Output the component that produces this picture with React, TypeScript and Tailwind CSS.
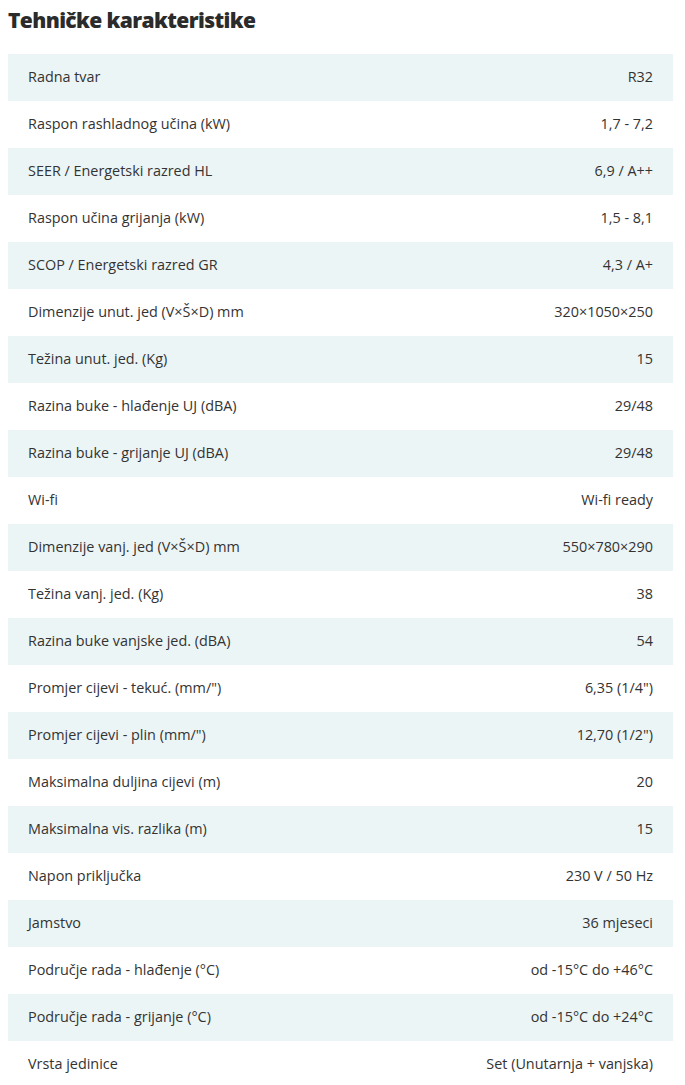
const specs: [string, string][] = [
  ["Radna tvar", "R32"],
  ["Raspon rashladnog učina (kW)", "1,7 - 7,2"],
  ["SEER / Energetski razred HL", "6,9 / A++"],
  ["Raspon učina grijanja (kW)", "1,5 - 8,1"],
  ["SCOP / Energetski razred GR", "4,3 / A+"],
  ["Dimenzije unut. jed (V×Š×D) mm", "320×1050×250"],
  ["Težina unut. jed. (Kg)", "15"],
  ["Razina buke - hlađenje UJ (dBA)", "29/48"],
  ["Razina buke - grijanje UJ (dBA)", "29/48"],
  ["Wi-fi", "Wi-fi ready"],
  ["Dimenzije vanj. jed (V×Š×D) mm", "550×780×290"],
  ["Težina vanj. jed. (Kg)", "38"],
  ["Razina buke vanjske jed. (dBA)", "54"],
  ["Promjer cijevi - tekuć. (mm/\")", "6,35 (1/4\")"],
  ["Promjer cijevi - plin (mm/\")", "12,70 (1/2\")"],
  ["Maksimalna duljina cijevi (m)", "20"],
  ["Maksimalna vis. razlika (m)", "15"],
  ["Napon priključka", "230 V / 50 Hz"],
  ["Jamstvo", "36 mjeseci"],
  ["Područje rada - hlađenje (°C)", "od -15°C do +46°C"],
  ["Područje rada - grijanje (°C)", "od -15°C do +24°C"],
  ["Vrsta jedinice", "Set (Unutarnja + vanjska)"],
];

export default function App() {
  return (
    <div className="bg-white px-2 text-[#333] font-['Open_Sans',sans-serif]">
      <h2 className="pt-[5px] pb-[19px] text-[21px] leading-[30px] font-extrabold tracking-[-0.6px] text-[#2b2b2b]">
        Tehničke karakteristike
      </h2>
      <div className="w-[665px]">
        {specs.map(([label, value], i) => (
          <div
            key={label}
            className={`flex h-[47px] items-center justify-between px-5 pb-[2px] text-[14.4px] ${
              i % 2 === 0 ? "bg-[#ecf5f6]" : "bg-white"
            }`}
          >
            <span>{label}</span>
            <span>{value}</span>
          </div>
        ))}
      </div>
    </div>
  );
}
